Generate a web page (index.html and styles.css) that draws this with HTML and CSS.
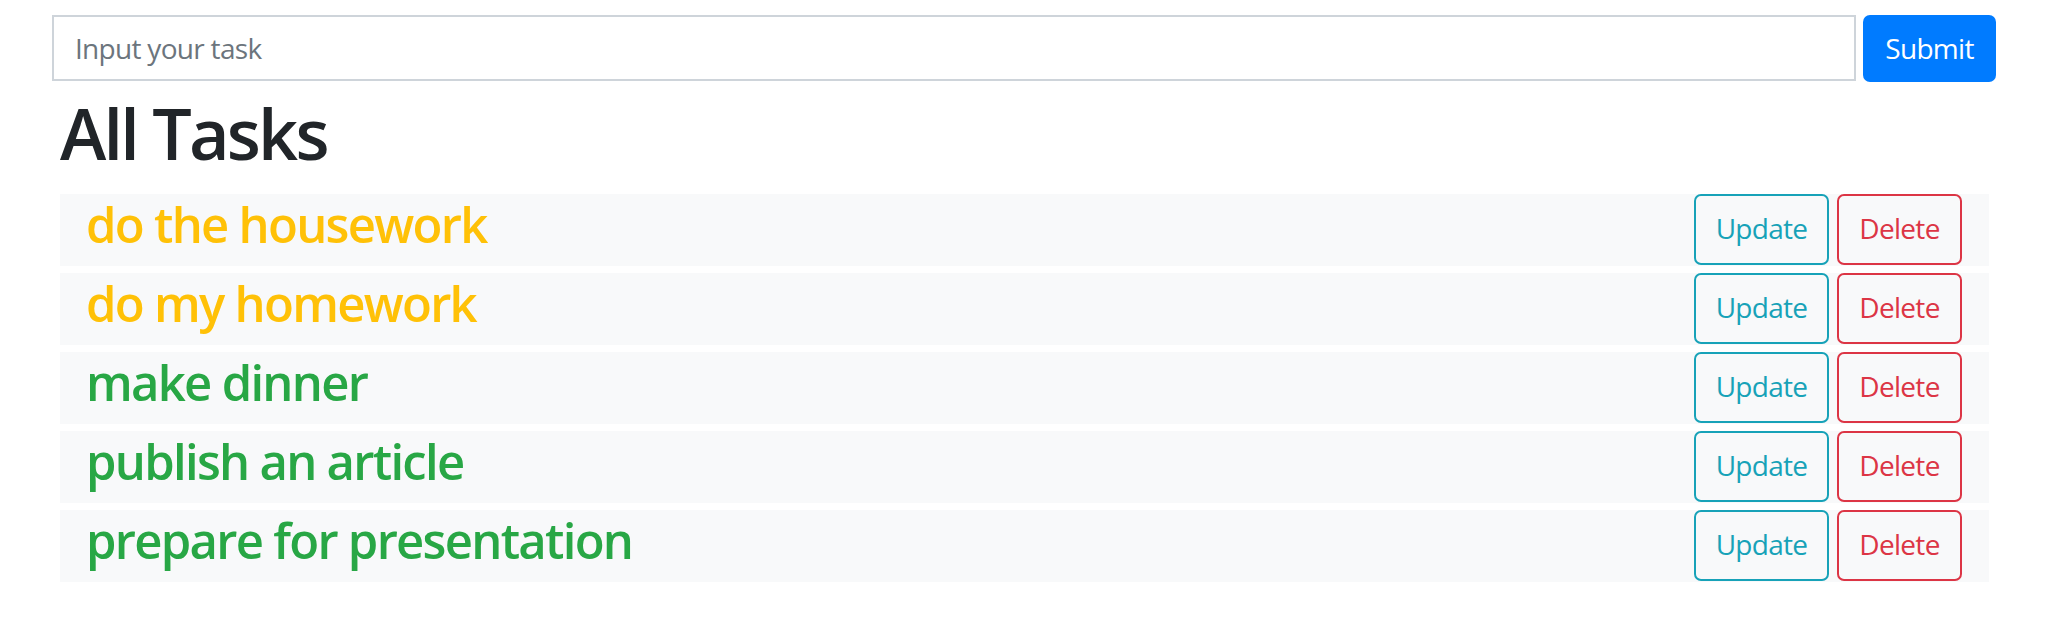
FILE: index.html
```html
<!DOCTYPE html>
<html lang="en">
<head>
<meta charset="utf-8">
<title>All Tasks</title>
<link rel="stylesheet" href="styles.css">
</head>
<body>
<form class="task-form">
  <input class="task-input" type="text" placeholder="Input your task">
  <button class="btn-submit" type="button">Submit</button>
</form>
<h1 class="page-title">All Tasks</h1>
<ul class="task-list">
  <li class="task-row">
    <h3 class="task-name pending">do the housework</h3>
    <div class="task-actions">
      <button class="btn btn-update" type="button">Update</button>
      <button class="btn btn-delete" type="button">Delete</button>
    </div>
  </li>
  <li class="task-row">
    <h3 class="task-name pending">do my homework</h3>
    <div class="task-actions">
      <button class="btn btn-update" type="button">Update</button>
      <button class="btn btn-delete" type="button">Delete</button>
    </div>
  </li>
  <li class="task-row">
    <h3 class="task-name done">make dinner</h3>
    <div class="task-actions">
      <button class="btn btn-update" type="button">Update</button>
      <button class="btn btn-delete" type="button">Delete</button>
    </div>
  </li>
  <li class="task-row">
    <h3 class="task-name done">publish an article</h3>
    <div class="task-actions">
      <button class="btn btn-update" type="button">Update</button>
      <button class="btn btn-delete" type="button">Delete</button>
    </div>
  </li>
  <li class="task-row">
    <h3 class="task-name done">prepare for presentation</h3>
    <div class="task-actions">
      <button class="btn btn-update" type="button">Update</button>
      <button class="btn btn-delete" type="button">Delete</button>
    </div>
  </li>
</ul>
</body>
</html>
```
FILE: styles.css
```css
* {
  box-sizing: border-box;
}

body {
  margin: 0;
  background: #ffffff;
  color: #212529;
  font-family: "Open Sans", "Noto Sans", sans-serif;
  font-size: 28px;
  letter-spacing: -0.025em;
}

.task-form {
  display: flex;
  gap: 7px;
  margin: 15px 56px 0 52px;
}

.task-input {
  flex: 1;
  height: 66px;
  padding: 0 21px;
  border: 2px solid #ced4da;
  border-radius: 0;
  font-family: inherit;
  font-size: 28px;
  letter-spacing: -0.025em;
  color: #495057;
  background: #fff;
  outline: none;
}

.task-input::placeholder {
  color: #6c757d;
}

.btn-submit {
  width: 133px;
  height: 67px;
  border: none;
  border-radius: 7px;
  background: #007bff;
  color: #fff;
  font-family: inherit;
  font-size: 28px;
  letter-spacing: -0.025em;
  padding: 0 0 2px;
}

.page-title {
  margin: 9px 0 0 60px;
  font-size: 70px;
  line-height: 84px;
  font-weight: 600;
  letter-spacing: -0.04em;
}

.task-list {
  list-style: none;
  margin: 19px 63px 0 60px;
  padding: 0;
  display: flex;
  flex-direction: column;
  gap: 7px;
}

.task-row {
  display: flex;
  justify-content: space-between;
  align-items: flex-start;
  height: 72px;
  padding: 0 27px 0 26px;
  background: #f8f9fa;
}

.task-name {
  margin: 0;
  padding-top: 1px;
  font-size: 49px;
  line-height: 59px;
  font-weight: 600;
  letter-spacing: -0.035em;
}

.pending {
  color: #ffc107;
}

.done {
  color: #28a745;
}

.task-actions {
  display: flex;
  gap: 8px;
}

.btn {
  height: 71px;
  padding: 0 0 4px;
  border: 2px solid;
  border-radius: 7px;
  background: transparent;
  font-family: inherit;
  font-size: 28px;
  letter-spacing: -0.025em;
}

.btn-update {
  width: 135px;
  color: #17a2b8;
  border-color: #17a2b8;
}

.btn-delete {
  width: 125px;
  color: #dc3545;
  border-color: #dc3545;
}
```
